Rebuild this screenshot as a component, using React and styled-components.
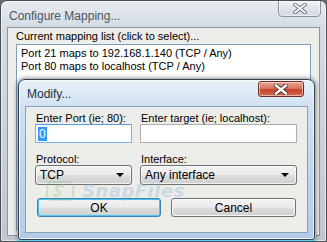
import React from 'react';
import styled, { createGlobalStyle } from 'styled-components';

const Global = createGlobalStyle`
  html, body {
    margin: 0;
    padding: 0;
    background: #6b6b6b;
    font-family: "Liberation Sans", Arial, sans-serif;
    font-size: 11px;
  }
`;

const Window = styled.div`
  position: relative;
  box-sizing: border-box;
  width: 327px;
  height: 242px;
  border: 1px solid #4a4e54;
  border-radius: 7px 7px 2px 2px;
  background: linear-gradient(180deg, #e6ebf0 0%, #d3dbe3 12%, #c9d1da 60%, #bfc6cd 100%);
  box-shadow: inset 0 0 0 1px rgba(255, 255, 255, 0.6);
  display: flex;
  flex-direction: column;
  padding: 0 6px 5px 6px;
  overflow: hidden;
`;

const TitleBar = styled.div`
  height: 26px;
  display: flex;
  align-items: flex-start;
  justify-content: space-between;
`;

const Title = styled.div`
  font-size: 12px;
  padding: ${p => (p.$active ? '7px' : '8px')} 0 0 2px;
  color: ${p => (p.$active ? '#1c2f47' : '#4d5560')};
`;

const CloseButton = styled.div`
  box-sizing: border-box;
  width: ${p => (p.$active ? 46 : 43)}px;
  height: ${p => (p.$active ? 16 : 17)}px;
  margin-top: ${p => (p.$active ? 1 : -1)}px;
  margin-right: ${p => (p.$active ? 4 : -1)}px;
  border: 1px solid ${p => (p.$active ? '#6b2c22' : '#8d939a')};
  border-radius: ${p => (p.$active ? '3px' : '0 0 4px 4px')};
  background: ${p =>
    p.$active
      ? 'linear-gradient(180deg, #e8a593 0%, #d8775f 45%, #c4432a 55%, #d66a4e 100%)'
      : 'linear-gradient(180deg, #f0f3f6 0%, #dfe4ea 50%, #d2d8df 100%)'};
  box-shadow: inset 0 0 0 1px rgba(255, 255, 255, 0.5);
  display: flex;
  align-items: center;
  justify-content: center;
`;

const Client = styled.div`
  flex: 1;
  box-sizing: border-box;
  background: #ecece9;
  border: 1px solid #8c949c;
  padding: 2px 8px 4px 8px;
  display: flex;
  flex-direction: column;
`;

const Label = styled.div`
  color: #000;
  line-height: 13px;
  height: 13px;
  white-space: nowrap;
`;

const ListBox = styled.div`
  flex: 1;
  margin-top: 1px;
  background: #fff;
  border: 1px solid #7f9db9;
  padding: 2px 4px;
`;

const ListItem = styled.div`
  line-height: 13px;
  white-space: nowrap;
  color: #000;
`;

const Dialog = styled.div`
  position: absolute;
  left: 17px;
  top: 78px;
  box-sizing: border-box;
  width: 297px;
  height: 161px;
  border: 1px solid #33414f;
  border-radius: 7px 7px 3px 3px;
  background: linear-gradient(180deg, #e9f1f9 0%, #cfe0f1 18%, #bcd2e9 70%, #b2cbe5 100%);
  box-shadow: 0 1px 0 1px #5fd0f4, 0 0 4px 1px rgba(0, 0, 0, 0.45), inset 0 0 0 1px rgba(255, 255, 255, 0.75);
  padding: 0 6px 6px 6px;
  display: flex;
  flex-direction: column;
`;

const DialogClient = styled.div`
  flex: 1;
  box-sizing: border-box;
  background: #ecece9;
  border: 1px solid #8aa0b8;
  padding: 5px 9px 0 9px;
  display: grid;
  grid-template-columns: 97px 157px;
  column-gap: 8px;
  grid-template-rows: 12px 19px 9px 13px 20px;
  align-content: start;
  position: relative;
`;

const FieldLabel = styled.div`
  line-height: 12px;
  white-space: nowrap;
  margin-left: 1px;
  color: #000;
  align-self: ${p => (p.$bottom ? 'end' : 'start')};
`;

const TextInput = styled.div`
  box-sizing: border-box;
  height: 19px;
  background: #fff;
  border: 1px solid ${p => (p.$focused ? '#7eb4ea' : '#abadb3')};
  border-top-color: ${p => (p.$focused ? '#569de5' : '#abadb3')};
  padding: 2px 2px;
  display: flex;
  align-items: center;
`;

const Selected = styled.span`
  background: #3399ff;
  color: #fff;
  font-size: 12px;
  line-height: 14px;
  padding: 0 1px;
`;

const Select = styled.div`
  box-sizing: border-box;
  height: 20px;
  border: 1px solid #707070;
  border-radius: 3px;
  background: linear-gradient(180deg, #f2f2f2 0%, #ebebeb 48%, #dddddd 52%, #cfcfcf 100%);
  box-shadow: inset 0 0 0 1px rgba(255, 255, 255, 0.7);
  display: flex;
  align-items: center;
  justify-content: space-between;
  padding: 0 7px 0 4px;
  font-size: 12px;
  line-height: 14px;
  color: #000;
`;

const Arrow = styled.span`
  width: 0;
  height: 0;
  border-left: 4px solid transparent;
  border-right: 4px solid transparent;
  border-top: 4px solid #000;
`;

const ButtonRow = styled.div`
  grid-column: 1 / span 2;
  display: grid;
  grid-template-columns: 124px 125px;
  column-gap: 10px;
  margin: 13px 0 0 2px;
`;

const Button = styled.div`
  box-sizing: border-box;
  height: 19px;
  border: 1px solid ${p => (p.$default ? '#3c7fb1' : '#707070')};
  border-radius: 3px;
  background: linear-gradient(180deg, #f2f2f2 0%, #ebebeb 48%, #dddddd 52%, #cfcfcf 100%);
  box-shadow: inset 0 0 0 1px ${p => (p.$default ? '#48c4f0' : 'rgba(255, 255, 255, 0.8)')};
  display: flex;
  align-items: center;
  justify-content: center;
  font-size: 12px;
  color: #000;
`;

const Watermark = styled.div`
  position: absolute;
  left: 20px;
  top: 77px;
  height: 14px;
  display: flex;
  align-items: center;
  gap: 6px;
  pointer-events: none;
  opacity: 0.3;
`;

const WatermarkText = styled.span`
  font-family: "DejaVu Sans", sans-serif;
  font-weight: bold;
  font-style: italic;
  font-size: 18px;
  line-height: 14px;
  letter-spacing: 0.5px;
  color: #7fb3d8;
`;

const CloseGlyph = ({ active }) => (
  <svg width="14" height="11" viewBox="0 0 14 11">
    <path
      d="M2 1.5 L12 9.5 M12 1.5 L2 9.5"
      stroke={active ? '#4a2a26' : '#6e747c'}
      strokeWidth={active ? 4.2 : 3.6}
      strokeLinecap="square"
    />
    <path
      d="M2 1.5 L12 9.5 M12 1.5 L2 9.5"
      stroke={active ? '#ffffff' : '#f4f6f8'}
      strokeWidth={active ? 2.4 : 1.8}
      strokeLinecap="square"
    />
  </svg>
);

const SnapLogo = () => (
  <svg width="30" height="20" viewBox="0 0 30 20">
    <rect x="1" y="1" width="26" height="18" rx="5" fill="none" stroke="#8cc77a" strokeWidth="2.5" />
    <path d="M18 5 C12 3 8 7 12 9.5 C16 12 12 16 7 14" fill="none" stroke="#8cc77a" strokeWidth="3" />
  </svg>
);

export default function App() {
  return (
    <>
      <Global />
      <Window>
        <TitleBar>
          <Title>Configure Mapping...</Title>
          <CloseButton>
            <CloseGlyph />
          </CloseButton>
        </TitleBar>
        <Client>
          <Label>Current mapping list (click to select)...</Label>
          <ListBox>
            <ListItem>Port 21 maps to 192.168.1.140 (TCP / Any)</ListItem>
            <ListItem>Port 80 maps to localhost (TCP / Any)</ListItem>
          </ListBox>
        </Client>

        <Dialog>
          <TitleBar>
            <Title $active>Modify...</Title>
            <CloseButton $active>
              <CloseGlyph active />
            </CloseButton>
          </TitleBar>
          <DialogClient>
            <FieldLabel>Enter Port (ie; 80):</FieldLabel>
            <FieldLabel>Enter target (ie; localhost):</FieldLabel>
            <TextInput $focused>
              <Selected>0</Selected>
            </TextInput>
            <TextInput />
            <span />
            <span />
            <FieldLabel $bottom>Protocol:</FieldLabel>
            <FieldLabel $bottom>Interface:</FieldLabel>
            <Select>
              TCP <Arrow />
            </Select>
            <Select>
              Any interface <Arrow />
            </Select>
            <ButtonRow>
              <Button $default>OK</Button>
              <Button>Cancel</Button>
            </ButtonRow>
            <Watermark>
              <SnapLogo />
              <WatermarkText>SnapFiles</WatermarkText>
            </Watermark>
          </DialogClient>
        </Dialog>
      </Window>
    </>
  );
}
